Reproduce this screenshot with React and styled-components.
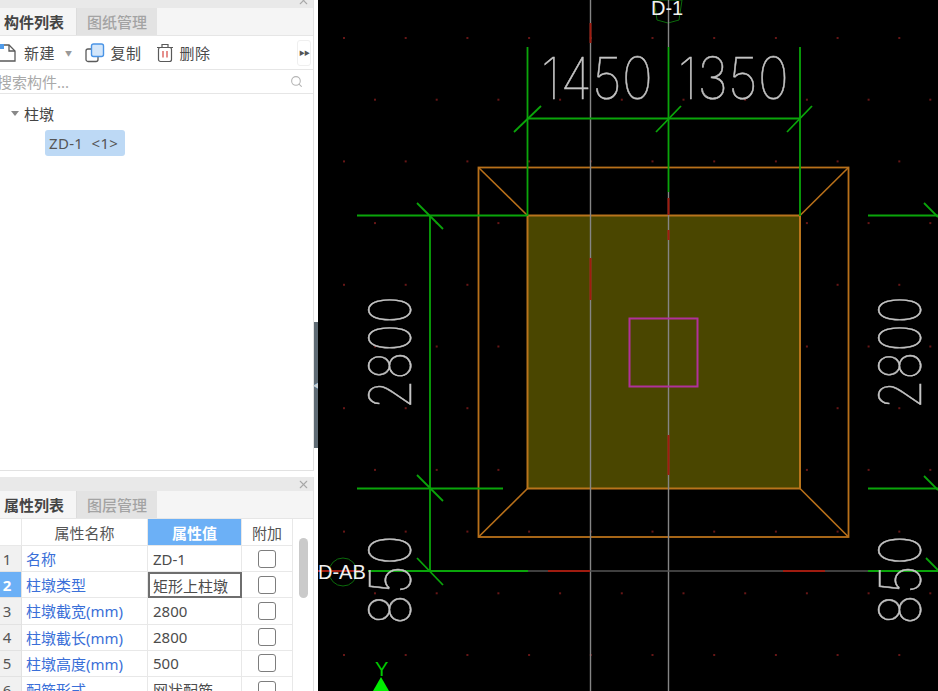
import React from 'react';
import styled, { createGlobalStyle } from 'styled-components';
import { X, Search } from 'lucide-react';

const Global = createGlobalStyle`
    html, body { margin: 0; padding: 0; height: 100%; background: #fff; overflow: hidden; }
    #root { height: 100%; }
    * { box-sizing: border-box; }
`;

//layout
const Page = styled.div`
    display: flex;
    width: 938px;
    height: 691px;
    overflow: hidden;
    font-family: "Noto Sans", "Noto Sans CJK SC", sans-serif;
    font-size: 15px;
    color: #444;
`;
const Sidebar = styled.div`
    display: flex;
    flex-direction: column;
    gap: 6px;
    width: 314px;
    flex-shrink: 0;
`;
const Splitter = styled.div`
    width: 4px;
    flex-shrink: 0;
    padding-top: 322px;
    background: #fff;
`;
const Handle = styled.div`
    display: flex;
    align-items: center;
    justify-content: center;
    height: 126px;
    background: #5f6b74;
    color: #c9ced2;
    font-size: 7px;
    line-height: 1;
`;
const Panel = styled.section`
    display: flex;
    flex-direction: column;
    height: ${p => p.$height}px;
    flex-shrink: 0;
    border-right: 1.5px solid #e2e2e2;
    border-bottom: ${p => (p.$open ? 'none' : '1.5px solid #e2e2e2')};
    overflow: hidden;
    background: #fff;
`;
const TitleBar = styled.div`
    display: flex;
    justify-content: flex-end;
    align-items: ${p => (p.$clipped ? 'flex-end' : 'center')};
    height: ${p => p.$height}px;
    flex-shrink: 0;
    padding-right: 3px;
    background: #e9e9e9;
    color: #a8a8a8;
    overflow: hidden;
`;
const Tabs = styled.div`
    display: flex;
    height: 28px;
    flex-shrink: 0;
    background: #f5f5f5;
    border-bottom: 1px solid #e6e6e6;
`;
const Tab = styled.div`
    display: flex;
    align-items: center;
    width: ${p => (p.$active ? 76 : 81)}px;
    padding-left: ${p => (p.$active ? 4 : 10)}px;
    font-weight: ${p => (p.$active ? 700 : 500)};
    color: ${p => (p.$active ? '#444' : '#a3a3a3')};
    background: ${p => (p.$active ? '#f5f5f5' : '#e3e3e3')};
    border-left: ${p => (p.$active ? 'none' : '1px solid #dcdcdc')};
`;
const Toolbar = styled.div`
    display: flex;
    align-items: center;
    height: 34px;
    flex-shrink: 0;
    border-bottom: 1px solid #e6e6e6;
`;
const ToolButton = styled.div`
    display: flex;
    align-items: center;
    gap: 6px;
    margin-left: ${p => p.$left}px;
    color: #4a4a4a;
    letter-spacing: 0.5px;
    svg { flex-shrink: 0; }
`;
const Caret = styled.span`
    margin-left: 4px;
    color: #999;
    font-size: 7px;
`;
const MoreButton = styled.div`
    display: flex;
    align-items: center;
    justify-content: center;
    width: 14px;
    height: 26px;
    margin-left: auto;
    margin-right: 2px;
    border: 1px solid #efefef;
    border-radius: 3px;
    color: #555;
    font-size: 6px;
    letter-spacing: -1px;
`;
const SearchRow = styled.div`
    display: flex;
    align-items: center;
    justify-content: space-between;
    height: 24px;
    flex-shrink: 0;
    padding-right: 10px;
    border-bottom: 1px solid #e6e6e6;
    color: #a9a9a9;
    span { margin-left: -3px; }
    svg { color: #b5b5b5; }
`;
const Tree = styled.div`
    flex: 1;
    padding-top: 7px;
`;
const TreeRoot = styled.div`
    display: flex;
    align-items: center;
    height: 24px;
    padding-left: 11px;
    gap: 4px;
`;
const TreeArrow = styled.span`
    width: 0;
    height: 0;
    border-left: 4px solid transparent;
    border-right: 4px solid transparent;
    border-top: 5px solid #888;
    margin-right: 1px;
`;
const TreeItem = styled.div`
    display: flex;
    align-items: center;
    width: 80px;
    height: 26px;
    margin: 5px 0 0 45px;
    padding-left: 4px;
    border-radius: 3px;
    background: #bdd9f5;
    color: #555;
    font-size: 15px;
    letter-spacing: 0.3px;
    white-space: pre;
`;
const TableWrap = styled.div`
    display: flex;
    flex: 1;
    min-height: 0;
`;
const Table = styled.div`
    display: grid;
    grid-template-columns: 22px 126px 94px 51px;
    grid-template-rows: 27px;
    grid-auto-rows: 26.2px;
    width: 293px;
    flex-shrink: 0;
    align-content: start;
`;
const HeadCell = styled.div`
    display: flex;
    align-items: center;
    justify-content: center;
    border-right: 1px solid #e8e8e8;
    border-bottom: 1px solid #e8e8e8;
    background: ${p => (p.$active ? '#6cb0f6' : '#fff')};
    color: ${p => (p.$active ? '#fff' : '#555')};
    font-weight: ${p => (p.$active ? 700 : 400)};
`;
const IndexCell = styled.div`
    display: flex;
    align-items: center;
    justify-content: center;
    padding-right: 7px;
    border-right: 1px solid #e2e2e2;
    border-bottom: 1px solid #e2e2e2;
    background: ${p => (p.$active ? '#6cb0f6' : '#f1f1f1')};
    color: ${p => (p.$active ? '#fff' : '#555')};
    font-weight: ${p => (p.$active ? 700 : 400)};
`;
const NameCell = styled.div`
    display: flex;
    align-items: center;
    padding-left: 4px;
    border-right: 1px solid #e8e8e8;
    border-bottom: 1px solid #e8e8e8;
    color: #3a6fd8;
    white-space: nowrap;
`;
const ValueCell = styled.div`
    display: flex;
    align-items: center;
    padding-left: ${p => (p.$editing ? 3 : 5)}px;
    border-right: ${p => (p.$editing ? '2px solid #6e6e6e' : '1px solid #e8e8e8')};
    border-bottom: ${p => (p.$editing ? '2px solid #6e6e6e' : '1px solid #e8e8e8')};
    border-top: ${p => (p.$editing ? '2px solid #6e6e6e' : 'none')};
    border-left: ${p => (p.$editing ? '2px solid #6e6e6e' : 'none')};
    color: #4c4c4c;
    white-space: nowrap;
    overflow: hidden;
`;
const CheckCell = styled.div`
    display: flex;
    align-items: center;
    justify-content: center;
    border-right: 1px solid #e8e8e8;
    border-bottom: 1px solid #e8e8e8;
`;
const Check = styled.span`
    width: 18px;
    height: 18px;
    border: 1px solid #7d7d7d;
    border-radius: 3px;
    background: #fff;
`;
const ScrollTrack = styled.div`
    flex: 1;
    padding: 19px 5px 0 6px;
`;
const ScrollThumb = styled.div`
    width: 9px;
    height: 60px;
    border-radius: 5px;
    background: #cacaca;
`;
const Canvas = styled.div`
    flex: 1;
    height: 691px;
    background: #000;
    overflow: hidden;
    svg { display: block; }
`;
const DimText = styled.text`
    font-family: Inter, "Liberation Sans", sans-serif;
    font-weight: 100;
    font-size: 58px;
    fill: #c4c4c4;
    stroke: #c4c4c4;
    stroke-width: 0.5px;
`;
const AxisText = styled.text`
    font-family: "Liberation Sans", sans-serif;
    font-size: 20px;
    fill: #f2f2f2;
`;
const AxisY = styled.text`
    font-family: "Liberation Sans", sans-serif;
    font-size: 20px;
    fill: #00c800;
`;

//data
const ROWS = [
    { name: '名称', value: 'ZD-1' },
    { name: '柱墩类型', value: '矩形上柱墩', editing: true },
    { name: '柱墩截宽(mm)', value: '2800' },
    { name: '柱墩截长(mm)', value: '2800' },
    { name: '柱墩高度(mm)', value: '500' },
    { name: '配筋形式', value: '网状配筋' },
];

const PITCH = 61.7;
const DOTS = [];
for (let r = 0; r < 11; r++) {
    const y = 37 + r * PITCH;
    const start = r % 2 === 0 ? 343 : 374;
    for (let c = 0; c < 10; c++) DOTS.push([start + c * PITCH, y]);
}

// x1 y1 x2 y2
const GREEN = [
    [527.5, 47, 527.5, 216],
    [668.5, 47, 668.5, 192],
    [800, 47, 800, 216],
    [527, 118.5, 800, 118.5],
    [514, 132, 541, 106],
    [656, 132, 681, 106],
    [787, 132, 812, 106],
    [357, 215.5, 527, 215.5],
    [357, 488.5, 503, 488.5],
    [368, 571, 528, 571],
    [430, 215, 430, 571],
    [417, 203, 443, 229],
    [417, 475, 443, 501],
    [417, 558, 443, 585],
    [868, 215.5, 938, 215.5],
    [868, 488.5, 938, 488.5],
    [868, 571, 938, 571],
    [924, 203, 938, 217],
    [924, 476, 938, 490],
    [926, 558, 938, 570],
];
const GRAY = [
    [590.5, 0, 590.5, 691],
    [668.5, 0, 668.5, 47],
    [668.5, 192, 668.5, 691],
];
const AXIS_DIM = [
    [528, 571, 868, 571],
];
const RED = [
    [590.5, 23, 590.5, 43],
    [590.5, 258, 590.5, 300],
    [668.5, 198, 668.5, 215],
    [668.5, 230, 668.5, 240],
    [668.5, 435, 668.5, 475],
    [548, 571, 590, 571],
    [783, 571, 825, 571],
    [318, 571, 360, 571],
];
const ORANGE = [
    [478.5, 167.5, 527.5, 215.5],
    [848.5, 167.5, 800, 215.5],
    [478.5, 537, 527.5, 488.5],
    [848.5, 537, 800, 488.5],
];

const NewIcon = () => (
    <svg width="22" height="22" viewBox="0 0 22 22" fill="none">
        <path d="M3 3h10l6 6v10H3" stroke="#5a5a5a" strokeWidth="1.3" />
        <path d="M13 3v6h6" stroke="#5a5a5a" strokeWidth="1.3" />
        <rect x="1" y="2" width="7" height="5" fill="#4f9bea" />
    </svg>
);
const CopyIcon = () => (
    <svg width="20" height="20" viewBox="0 0 20 20" fill="none">
        <rect x="1" y="6" width="12" height="12.5" rx="2" stroke="#5a5a5a" strokeWidth="1.3" />
        <rect x="6.5" y="1" width="12" height="12.5" rx="2" fill="#d3e6fa" stroke="#4a94e6" strokeWidth="1.4" />
    </svg>
);
const TrashIcon = () => (
    <svg width="18" height="20" viewBox="0 0 18 20" fill="none">
        <path d="M1 4.5h16M6 4.5V1.5h6v3" stroke="#5a5a5a" strokeWidth="1.2" />
        <rect x="2.5" y="4.5" width="13" height="14" rx="2" stroke="#5a5a5a" strokeWidth="1.2" />
        <path d="M7 8v6.5M11 8v6.5" stroke="#d9534f" strokeWidth="1.3" />
    </svg>
);

const Lines = ({ items, color, width }) => (
    <g stroke={color} strokeWidth={width}>
        {items.map((l, i) => <line key={i} x1={l[0]} y1={l[1]} x2={l[2]} y2={l[3]} />)}
    </g>
);

const VerticalDim = ({ x, y, length, children }) => (
    <DimText transform={`translate(${x},${y}) rotate(-90)`} textLength={length} lengthAdjust="spacingAndGlyphs">
        {children}
    </DimText>
);

const Drawing = () => (
    <svg width="620" height="691" viewBox="318 0 620 691">
        <g fill="#661616">
            {DOTS.map((d, i) => <rect key={i} x={d[0]} y={d[1]} width="2" height="2" />)}
        </g>
        <polygon points="657,20 668,23 679,20 682,0 654,0" fill="none" stroke="#0b6b0b" strokeWidth="1" />
        <circle cx="343" cy="572" r="14" fill="none" stroke="#0b6b0b" strokeWidth="1" />
        <rect x="527.5" y="215.5" width="272.5" height="273" fill="#4a4600" stroke="#b8741c" strokeWidth="2" />
        <rect x="478.5" y="167.5" width="370" height="369.5" fill="none" stroke="#b8701a" strokeWidth="1.8" />
        <Lines items={ORANGE} color="#b8701a" width="1.6" />
        <Lines items={GRAY} color="#858585" width="1.4" />
        <Lines items={AXIS_DIM} color="#555" width="1.4" />
        <Lines items={RED} color="#a01c10" width="2" />
        <Lines items={GREEN} color="#0aa50a" width="1.8" />
        <rect x="629.5" y="318.5" width="68" height="68" fill="none" stroke="#b1309b" strokeWidth="2" />
        <DimText x="541" y="99" textLength="112" lengthAdjust="spacingAndGlyphs">1450</DimText>
        <DimText x="678" y="99" textLength="111" lengthAdjust="spacingAndGlyphs">1350</DimText>
        <VerticalDim x={411} y={409} length={113}>2800</VerticalDim>
        <VerticalDim x={921} y={409} length={113}>2800</VerticalDim>
        <VerticalDim x={411} y={625} length={90}>850</VerticalDim>
        <VerticalDim x={921} y={625} length={90}>850</VerticalDim>
        <AxisText x="651" y="15">D-1</AxisText>
        <AxisText x="318" y="579">D-AB</AxisText>
        <AxisY x="375" y="676">Y</AxisY>
        <polygon points="381,677 373,691 389,691" fill="#00ee00" />
    </svg>
);

const App = () => {
    return (
        <Page>
            <Global />
            <Sidebar>
                <Panel $height={471}>
                    <TitleBar $height={8} $clipped>
                        <X size={13} style={{ marginBottom: 1 }} />
                    </TitleBar>
                    <Tabs>
                        <Tab $active>构件列表</Tab>
                        <Tab>图纸管理</Tab>
                    </Tabs>
                    <Toolbar>
                        <ToolButton $left={-4}><NewIcon />新建<Caret>▼</Caret></ToolButton>
                        <ToolButton $left={12}><CopyIcon />复制</ToolButton>
                        <ToolButton $left={14}><TrashIcon />删除</ToolButton>
                        <MoreButton>▶▶</MoreButton>
                    </Toolbar>
                    <SearchRow>
                        <span>搜索构件...</span>
                        <Search size={13} />
                    </SearchRow>
                    <Tree>
                        <TreeRoot><TreeArrow />柱墩</TreeRoot>
                        <TreeItem>ZD-1  &lt;1&gt;</TreeItem>
                    </Tree>
                </Panel>
                <Panel $height={214} $open>
                    <TitleBar $height={14}>
                        <X size={13} />
                    </TitleBar>
                    <Tabs>
                        <Tab $active>属性列表</Tab>
                        <Tab>图层管理</Tab>
                    </Tabs>
                    <TableWrap>
                        <Table>
                            <HeadCell />
                            <HeadCell>属性名称</HeadCell>
                            <HeadCell $active>属性值</HeadCell>
                            <HeadCell>附加</HeadCell>
                            {ROWS.map((row, i) => (
                                <React.Fragment key={row.name}>
                                    <IndexCell $active={row.editing}>{i + 1}</IndexCell>
                                    <NameCell>{row.name}</NameCell>
                                    <ValueCell $editing={row.editing}>{row.value}</ValueCell>
                                    <CheckCell><Check /></CheckCell>
                                </React.Fragment>
                            ))}
                        </Table>
                        <ScrollTrack><ScrollThumb /></ScrollTrack>
                    </TableWrap>
                </Panel>
            </Sidebar>
            <Splitter>
                <Handle>◀</Handle>
            </Splitter>
            <Canvas>
                <Drawing />
            </Canvas>
        </Page>
    );
};

export default App;
